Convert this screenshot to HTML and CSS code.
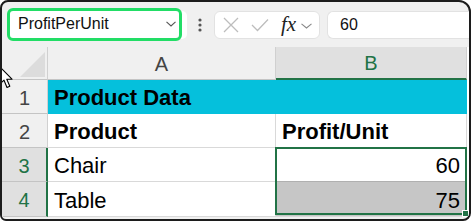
FILE: index.html
```html
<!DOCTYPE html>
<html lang="en">
<head>
    <meta charset="UTF-8">
    <title>ProfitPerUnit</title>
    <link rel="stylesheet" href="styles.css">
</head>
<body>
    <div class="window">
        <div class="toolbar">
            <div class="namebox">
                <div class="namebox-field">
                    <span>ProfitPerUnit</span>
                    <svg class="chevron" width="10" height="6" viewBox="0 0 10 6"><path d="M0.5 0.8 L5 5 L9.5 0.8" fill="none" stroke="#555" stroke-width="1.1"/></svg>
                </div>
            </div>
            <svg class="dots" width="4" height="14" viewBox="0 0 4 14">
                <circle cx="2" cy="2" r="1.6" fill="#555"/>
                <circle cx="2" cy="7" r="1.6" fill="#555"/>
                <circle cx="2" cy="12" r="1.6" fill="#555"/>
            </svg>
            <div class="fx-buttons">
                <svg width="16" height="16" viewBox="0 0 16 16"><path d="M1 1 L15 15 M15 1 L1 15" stroke="#bdbdbd" stroke-width="1.3"/></svg>
                <svg class="check" width="18" height="14" viewBox="0 0 18 14"><path d="M1 7 L6.5 12.5 L17 1.5" fill="none" stroke="#bdbdbd" stroke-width="1.3"/></svg>
                <span class="fx">fx</span>
                <svg class="chevron" width="11" height="6" viewBox="0 0 11 6"><path d="M0.5 0.8 L5.5 5 L10.5 0.8" fill="none" stroke="#888" stroke-width="1.1"/></svg>
            </div>
            <div class="formula">60</div>
        </div>

        <div class="sheet">
            <div class="corner"><span class="corner-tri"></span></div>
            <div class="col-head">A</div>
            <div class="col-head selected">B</div>

            <div class="row-head">1</div>
            <div class="cell title">Product Data</div>
            <div class="cell title"></div>

            <div class="row-head">2</div>
            <div class="cell bold">Product</div>
            <div class="cell bold">Profit/Unit</div>

            <div class="row-head selected">3</div>
            <div class="cell">Chair</div>
            <div class="cell num b3">60</div>

            <div class="row-head selected">4</div>
            <div class="cell">Table</div>
            <div class="cell num shaded b4">75</div>

            <div class="selection"><span class="fill-handle"></span></div>
        </div>

        <svg class="cursor" width="14" height="24" viewBox="0 0 14 24">
            <path d="M1 1 L1 18 L5 14.2 L8 21.5 L10.8 20.3 L7.8 13.2 L13 13.2 Z" fill="#fff" stroke="#000" stroke-width="1.1" stroke-linejoin="round"/>
        </svg>
    </div>
</body>
</html>
```

FILE: styles.css
```css
body {
    margin: 0;
    background-color: white;
    font-family: "Liberation Sans", Arial, sans-serif;
}

.window {
    position: relative;
    width: 471px;
    height: 221px;
    box-sizing: border-box;
    border: 2px solid #1c1c1c;
    border-radius: 8px 12px 8px 6px;
    background-color: #f0f0f0;
    overflow: hidden;
}

/* toolbar */

.toolbar {
    display: flex;
    align-items: center;
    height: 45px;
    padding-left: 6px;
}

.namebox {
    display: flex;
    width: 179px;
    height: 28px;
    background-color: white;
    border-radius: 5px;
}

.namebox-field {
    display: flex;
    align-items: center;
    justify-content: space-between;
    width: 175px;
    height: 33px;
    margin: -3px 0 -2px -1px;
    padding: 0 3px 0 8px;
    box-sizing: border-box;
    border: 3px solid #22dd66;
    border-radius: 6px;
    font-size: 16px;
    color: #111;
}

.dots {
    margin-left: 11px;
}

.fx-buttons {
    display: flex;
    align-items: center;
    width: 106px;
    height: 28px;
    margin-left: 12px;
    padding-left: 8px;
    box-sizing: border-box;
    background-color: white;
    border: 1px solid #e2e2e2;
    border-radius: 6px;
}

.fx-buttons .check {
    margin-left: 12px;
}

.fx {
    margin-left: 12px;
    font-family: "Liberation Serif", serif;
    font-style: italic;
    font-size: 21px;
    color: #222;
    line-height: 1;
}

.fx-buttons .chevron {
    margin-left: 5px;
    margin-top: 2px;
}

.formula {
    flex: 1;
    height: 28px;
    margin-left: 7px;
    padding-left: 12px;
    box-sizing: border-box;
    background-color: white;
    border: 1px solid #e2e2e2;
    border-right: none;
    border-radius: 6px 0 0 6px;
    font-size: 16px;
    line-height: 26px;
    color: #111;
}

/* sheet grid */

.sheet {
    display: grid;
    grid-template-columns: 46px 228px 191px;
    grid-template-rows: 33px 34px 34px 34px 35px;
    background-color: white;
}

.corner,
.col-head,
.row-head {
    background-color: #f0f0f0;
    color: #444;
    font-size: 20px;
    border-right: 1px solid #d0d0d0;
    border-bottom: 1px solid #c4c4c4;
    display: flex;
    align-items: center;
    justify-content: center;
}

.corner {
    position: relative;
}

.corner-tri {
    position: absolute;
    right: 2px;
    bottom: 2px;
    width: 0;
    height: 0;
    border-left: 25px solid transparent;
    border-bottom: 25px solid #dcdcdc;
}

.col-head {
    padding-top: 2px;
}

.col-head.selected {
    background-color: #e0e0e0;
    color: #217346;
    border-bottom: 2px solid #217346;
}

.row-head {
    padding-top: 3px;
}

.row-head.selected {
    background-color: #e0e0e0;
    color: #217346;
    border-right: 2px solid #217346;
}

.cell {
    display: flex;
    align-items: center;
    padding: 3px 6px 0 6px;
    font-size: 22px;
    color: #000;
    border-right: 1px solid #d9d9d9;
    border-bottom: 1px solid #d9d9d9;
    white-space: nowrap;
}

.cell.title {
    background-color: #05c0dc;
    border-color: #05c0dc;
    font-weight: bold;
}

.cell.bold {
    font-weight: bold;
}

.cell.num {
    justify-content: flex-end;
}

.cell.b3 {
    grid-column: 3;
    grid-row: 4;
}

.cell.b4 {
    grid-column: 3;
    grid-row: 5;
}

.cell.shaded {
    background-color: #c6c6c6;
    border-top: 1px solid #b0b0b0;
    margin-top: -1px;
}

.selection {
    grid-column: 3;
    grid-row: 4 / 6;
    position: relative;
    margin: -1px 0 2px -1px;
    border: 2px solid #217346;
    pointer-events: none;
}

.fill-handle {
    position: absolute;
    right: -4px;
    bottom: -4px;
    width: 5px;
    height: 5px;
    background-color: #217346;
    border: 1px solid white;
}

.cursor {
    position: absolute;
    left: -3px;
    top: 64px;
}
```
